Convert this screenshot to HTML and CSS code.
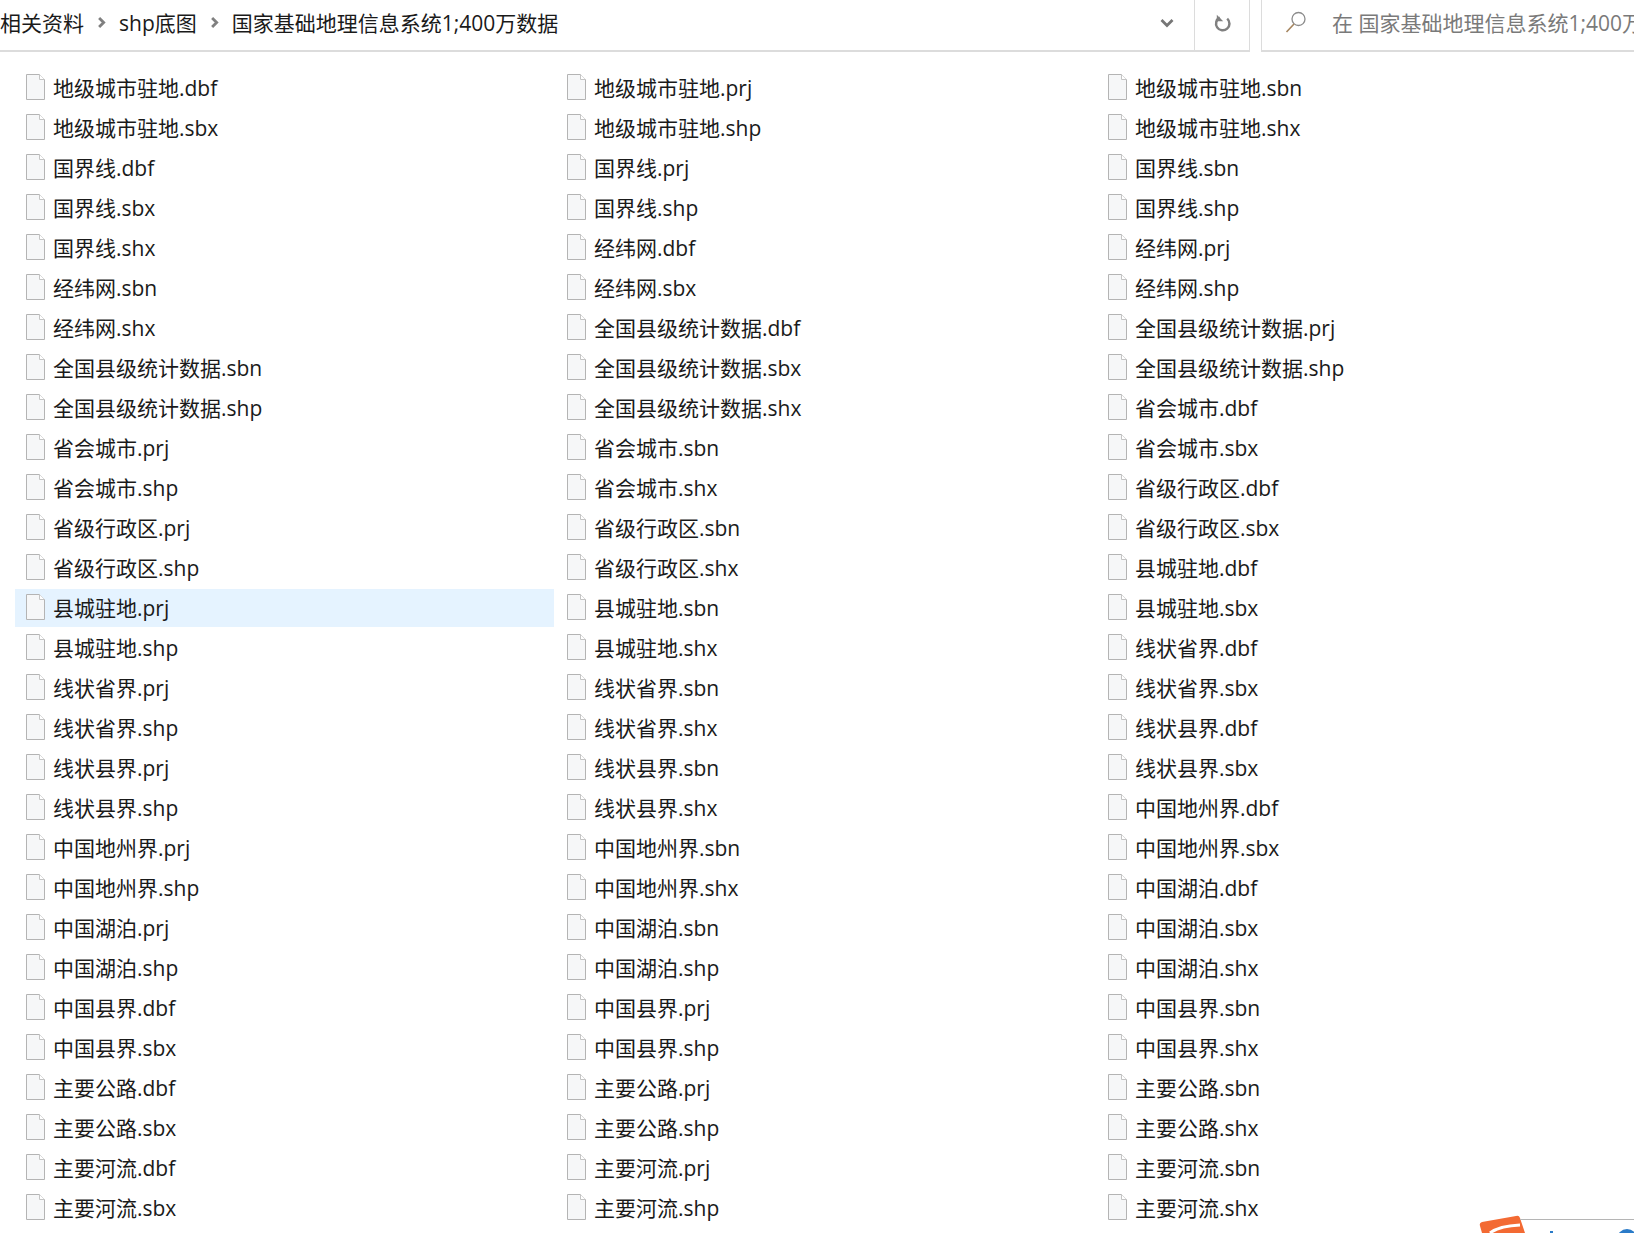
FILE: index.html
```html
<!DOCTYPE html>
<html lang="zh-CN">
<head>
<meta charset="utf-8">
<title>国家基础地理信息系统1;400万数据</title>
<link rel="stylesheet" href="styles.css">
</head>
<body>
<svg class="defs" width="0" height="0" aria-hidden="true">
  <symbol id="doc" viewBox="0 0 21 26">
    <path d="M1.500 .5H14.500L19.500 5.500V25.500H1.500Z" fill="#f6f7f8" stroke="#b4b4b4"/>
    <path d="M14.500 .5V5.500H19.500" fill="#fff" stroke="#c4c4c4"/>
  </symbol>
</svg>
<header class="bar">
  <nav class="crumbs">
    <span>相关资料</span>
    <svg class="sep" viewBox="0 0 8 12"><path d="M1.800 1.800L6 6l-4.200 4.200" fill="none" stroke="#808080" stroke-width="2.600"/></svg>
    <span>shp底图</span>
    <svg class="sep" viewBox="0 0 8 12"><path d="M1.800 1.800L6 6l-4.200 4.200" fill="none" stroke="#808080" stroke-width="2.600"/></svg>
    <span>国家基础地理信息系统1;400万数据</span>
  </nav>
  <div class="btn chev"><svg viewBox="0 0 14 10" width="14" height="10"><path d="M1.500 2l5.500 5.500L12.500 2" fill="none" stroke="#767676" stroke-width="2.800"/></svg></div>
  <div class="btn refresh"><svg viewBox="0 0 18 18" width="18" height="18"><path d="M6.800 3.600A6.700 6.700 0 1 0 14.200 4.600" fill="none" stroke="#808080" stroke-width="2.500"/><path d="M3.800 .8v6.400h6.400z" fill="#808080"/></svg></div>
  <div class="search">
    <svg class="glass" viewBox="0 0 24 24" width="24" height="24"><circle cx="14.500" cy="9" r="6.500" fill="none" stroke="#8c8c8c" stroke-width="1.300"/><path d="M10 14L2.500 22" stroke="#a5855f" stroke-width="1.600"/></svg>
    <span>在 国家基础地理信息系统1;400万数据</span>
  </div>
</header>
<main class="files">
  <div class="file"><svg class="ic"><use href="#doc"/></svg>地级城市驻地.dbf</div>
  <div class="file"><svg class="ic"><use href="#doc"/></svg>地级城市驻地.prj</div>
  <div class="file"><svg class="ic"><use href="#doc"/></svg>地级城市驻地.sbn</div>
  <div class="file"><svg class="ic"><use href="#doc"/></svg>地级城市驻地.sbx</div>
  <div class="file"><svg class="ic"><use href="#doc"/></svg>地级城市驻地.shp</div>
  <div class="file"><svg class="ic"><use href="#doc"/></svg>地级城市驻地.shx</div>
  <div class="file"><svg class="ic"><use href="#doc"/></svg>国界线.dbf</div>
  <div class="file"><svg class="ic"><use href="#doc"/></svg>国界线.prj</div>
  <div class="file"><svg class="ic"><use href="#doc"/></svg>国界线.sbn</div>
  <div class="file"><svg class="ic"><use href="#doc"/></svg>国界线.sbx</div>
  <div class="file"><svg class="ic"><use href="#doc"/></svg>国界线.shp</div>
  <div class="file"><svg class="ic"><use href="#doc"/></svg>国界线.shp</div>
  <div class="file"><svg class="ic"><use href="#doc"/></svg>国界线.shx</div>
  <div class="file"><svg class="ic"><use href="#doc"/></svg>经纬网.dbf</div>
  <div class="file"><svg class="ic"><use href="#doc"/></svg>经纬网.prj</div>
  <div class="file"><svg class="ic"><use href="#doc"/></svg>经纬网.sbn</div>
  <div class="file"><svg class="ic"><use href="#doc"/></svg>经纬网.sbx</div>
  <div class="file"><svg class="ic"><use href="#doc"/></svg>经纬网.shp</div>
  <div class="file"><svg class="ic"><use href="#doc"/></svg>经纬网.shx</div>
  <div class="file"><svg class="ic"><use href="#doc"/></svg>全国县级统计数据.dbf</div>
  <div class="file"><svg class="ic"><use href="#doc"/></svg>全国县级统计数据.prj</div>
  <div class="file"><svg class="ic"><use href="#doc"/></svg>全国县级统计数据.sbn</div>
  <div class="file"><svg class="ic"><use href="#doc"/></svg>全国县级统计数据.sbx</div>
  <div class="file"><svg class="ic"><use href="#doc"/></svg>全国县级统计数据.shp</div>
  <div class="file"><svg class="ic"><use href="#doc"/></svg>全国县级统计数据.shp</div>
  <div class="file"><svg class="ic"><use href="#doc"/></svg>全国县级统计数据.shx</div>
  <div class="file"><svg class="ic"><use href="#doc"/></svg>省会城市.dbf</div>
  <div class="file"><svg class="ic"><use href="#doc"/></svg>省会城市.prj</div>
  <div class="file"><svg class="ic"><use href="#doc"/></svg>省会城市.sbn</div>
  <div class="file"><svg class="ic"><use href="#doc"/></svg>省会城市.sbx</div>
  <div class="file"><svg class="ic"><use href="#doc"/></svg>省会城市.shp</div>
  <div class="file"><svg class="ic"><use href="#doc"/></svg>省会城市.shx</div>
  <div class="file"><svg class="ic"><use href="#doc"/></svg>省级行政区.dbf</div>
  <div class="file"><svg class="ic"><use href="#doc"/></svg>省级行政区.prj</div>
  <div class="file"><svg class="ic"><use href="#doc"/></svg>省级行政区.sbn</div>
  <div class="file"><svg class="ic"><use href="#doc"/></svg>省级行政区.sbx</div>
  <div class="file"><svg class="ic"><use href="#doc"/></svg>省级行政区.shp</div>
  <div class="file"><svg class="ic"><use href="#doc"/></svg>省级行政区.shx</div>
  <div class="file"><svg class="ic"><use href="#doc"/></svg>县城驻地.dbf</div>
  <div class="file hover"><svg class="ic"><use href="#doc"/></svg>县城驻地.prj</div>
  <div class="file"><svg class="ic"><use href="#doc"/></svg>县城驻地.sbn</div>
  <div class="file"><svg class="ic"><use href="#doc"/></svg>县城驻地.sbx</div>
  <div class="file"><svg class="ic"><use href="#doc"/></svg>县城驻地.shp</div>
  <div class="file"><svg class="ic"><use href="#doc"/></svg>县城驻地.shx</div>
  <div class="file"><svg class="ic"><use href="#doc"/></svg>线状省界.dbf</div>
  <div class="file"><svg class="ic"><use href="#doc"/></svg>线状省界.prj</div>
  <div class="file"><svg class="ic"><use href="#doc"/></svg>线状省界.sbn</div>
  <div class="file"><svg class="ic"><use href="#doc"/></svg>线状省界.sbx</div>
  <div class="file"><svg class="ic"><use href="#doc"/></svg>线状省界.shp</div>
  <div class="file"><svg class="ic"><use href="#doc"/></svg>线状省界.shx</div>
  <div class="file"><svg class="ic"><use href="#doc"/></svg>线状县界.dbf</div>
  <div class="file"><svg class="ic"><use href="#doc"/></svg>线状县界.prj</div>
  <div class="file"><svg class="ic"><use href="#doc"/></svg>线状县界.sbn</div>
  <div class="file"><svg class="ic"><use href="#doc"/></svg>线状县界.sbx</div>
  <div class="file"><svg class="ic"><use href="#doc"/></svg>线状县界.shp</div>
  <div class="file"><svg class="ic"><use href="#doc"/></svg>线状县界.shx</div>
  <div class="file"><svg class="ic"><use href="#doc"/></svg>中国地州界.dbf</div>
  <div class="file"><svg class="ic"><use href="#doc"/></svg>中国地州界.prj</div>
  <div class="file"><svg class="ic"><use href="#doc"/></svg>中国地州界.sbn</div>
  <div class="file"><svg class="ic"><use href="#doc"/></svg>中国地州界.sbx</div>
  <div class="file"><svg class="ic"><use href="#doc"/></svg>中国地州界.shp</div>
  <div class="file"><svg class="ic"><use href="#doc"/></svg>中国地州界.shx</div>
  <div class="file"><svg class="ic"><use href="#doc"/></svg>中国湖泊.dbf</div>
  <div class="file"><svg class="ic"><use href="#doc"/></svg>中国湖泊.prj</div>
  <div class="file"><svg class="ic"><use href="#doc"/></svg>中国湖泊.sbn</div>
  <div class="file"><svg class="ic"><use href="#doc"/></svg>中国湖泊.sbx</div>
  <div class="file"><svg class="ic"><use href="#doc"/></svg>中国湖泊.shp</div>
  <div class="file"><svg class="ic"><use href="#doc"/></svg>中国湖泊.shp</div>
  <div class="file"><svg class="ic"><use href="#doc"/></svg>中国湖泊.shx</div>
  <div class="file"><svg class="ic"><use href="#doc"/></svg>中国县界.dbf</div>
  <div class="file"><svg class="ic"><use href="#doc"/></svg>中国县界.prj</div>
  <div class="file"><svg class="ic"><use href="#doc"/></svg>中国县界.sbn</div>
  <div class="file"><svg class="ic"><use href="#doc"/></svg>中国县界.sbx</div>
  <div class="file"><svg class="ic"><use href="#doc"/></svg>中国县界.shp</div>
  <div class="file"><svg class="ic"><use href="#doc"/></svg>中国县界.shx</div>
  <div class="file"><svg class="ic"><use href="#doc"/></svg>主要公路.dbf</div>
  <div class="file"><svg class="ic"><use href="#doc"/></svg>主要公路.prj</div>
  <div class="file"><svg class="ic"><use href="#doc"/></svg>主要公路.sbn</div>
  <div class="file"><svg class="ic"><use href="#doc"/></svg>主要公路.sbx</div>
  <div class="file"><svg class="ic"><use href="#doc"/></svg>主要公路.shp</div>
  <div class="file"><svg class="ic"><use href="#doc"/></svg>主要公路.shx</div>
  <div class="file"><svg class="ic"><use href="#doc"/></svg>主要河流.dbf</div>
  <div class="file"><svg class="ic"><use href="#doc"/></svg>主要河流.prj</div>
  <div class="file"><svg class="ic"><use href="#doc"/></svg>主要河流.sbn</div>
  <div class="file"><svg class="ic"><use href="#doc"/></svg>主要河流.sbx</div>
  <div class="file"><svg class="ic"><use href="#doc"/></svg>主要河流.shp</div>
  <div class="file"><svg class="ic"><use href="#doc"/></svg>主要河流.shx</div>
</main>
<svg class="logo" viewBox="0 0 48 18" width="48" height="18" aria-hidden="true"><path d="M3 7Q0 8 1 11L3 18H46L41 3Q40 0 37 1Z" fill="#f36a33"/><path d="M11 18Q20 11 41 10" fill="none" stroke="#fff" stroke-width="3"/></svg>
<div class="corner"><span class="dot"></span><span class="ring"></span></div>
</body>
</html>
```
FILE: styles.css
```css
* { box-sizing: border-box; }
html, body { margin: 0; padding: 0; }
body {
  width: 1634px;
  height: 1233px;
  overflow: hidden;
  position: relative;
  background: #fff;
  color: #1a1a1a;
  font-family: "Open Sans", "Noto Sans CJK SC", sans-serif;
  font-size: 21px;
}
.defs { position: absolute; }
.bar {
  display: flex;
  align-items: stretch;
  height: 52px;
}
.crumbs {
  flex: 0 0 1138px;
  display: flex;
  align-items: center;
  gap: 13px;
  border-bottom: 2px solid #dcdcdc;
  white-space: nowrap;
  padding-bottom: 7px;
}
.sep { width: 9px; height: 13px; margin-top: 2px; }
.btn {
  display: flex;
  align-items: center;
  justify-content: center;
  border-bottom: 2px solid #dcdcdc;
  border-right: 1px solid #dcdcdc;
  padding-bottom: 4px;
}
.chev { width: 57px; padding-left: 2px; }
.refresh { width: 55px; }
.search {
  margin-left: 11px;
  flex: 1;
  min-width: 0;
  display: flex;
  align-items: center;
  gap: 24px;
  padding: 0 0 7px 22px;
  border-left: 1px solid #dcdcdc;
  border-bottom: 2px solid #dcdcdc;
  color: #7a7a7a;
  white-space: nowrap;
  overflow: hidden;
}
.glass { flex: none; }
.files {
  display: grid;
  grid-template-columns: repeat(3, 541px);
  grid-auto-rows: 40px;
  padding: 17px 0 0 15px;
}
.file {
  display: flex;
  align-items: center;
  gap: 7px;
  width: 539px;
  height: 38px;
  padding: 0 0 2px 10px;
  white-space: nowrap;
}
.hover { background: #e5f3ff; }
.ic { width: 21px; height: 26px; flex: none; }
.logo { position: absolute; left: 1479px; bottom: 0; }
.corner {
  position: absolute;
  right: 0;
  bottom: 0;
  width: 114px;
  height: 14px;
  border-top: 1px solid #b5b5b5;
}
.dot {
  position: absolute;
  left: 30px;
  bottom: 0;
  width: 3px;
  height: 2px;
  background: #2a7bc8;
}
.ring {
  position: absolute;
  right: -3px;
  bottom: -16px;
  width: 20px;
  height: 20px;
  border: 4px solid #2a7bc8;
  border-radius: 50%;
}
```
